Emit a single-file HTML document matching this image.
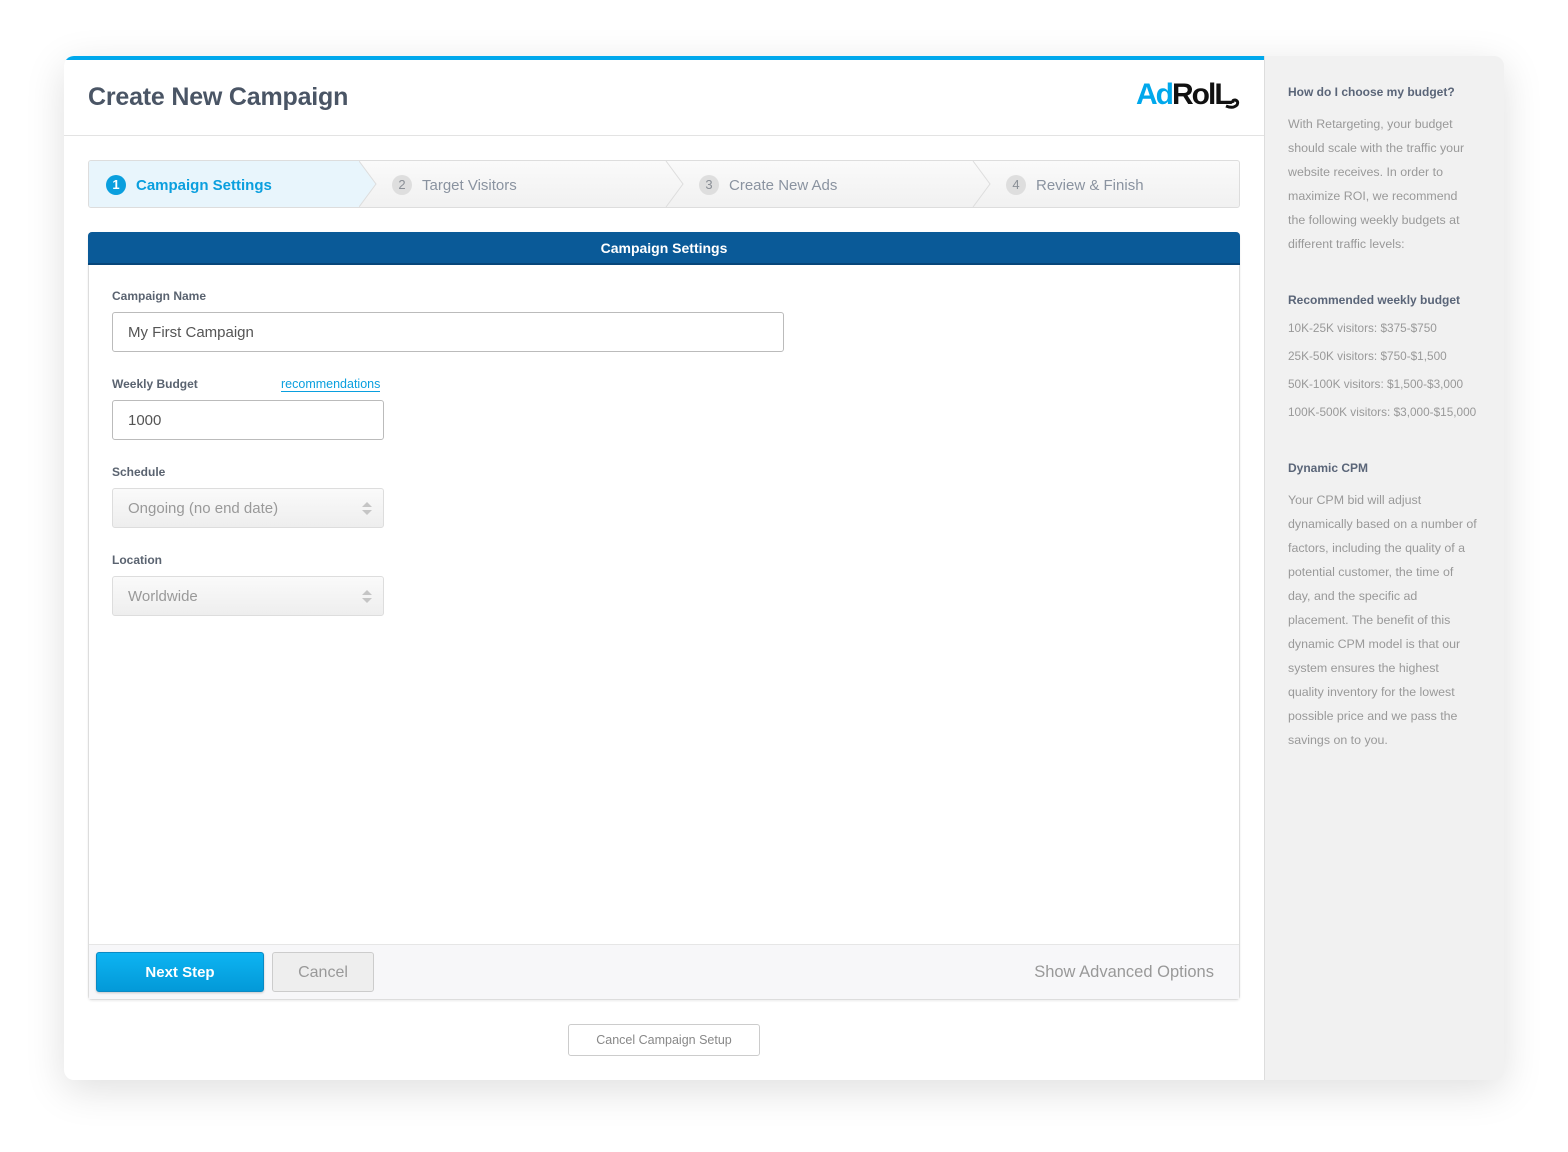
<!DOCTYPE html>
<html><head><style>
*{box-sizing:border-box;margin:0;padding:0}
body{width:1568px;height:1152px;background:#fff;font-family:"Liberation Sans",sans-serif;position:relative;overflow:hidden}
.card{position:absolute;left:64px;top:56px;width:1440px;height:1024px;border-radius:10px;background:#f1f1f1;box-shadow:0 10px 40px rgba(0,0,0,.13);overflow:hidden}
.main{position:absolute;left:0;top:0;width:1201px;height:1024px;background:#fff;border-right:1px solid #ddd}
.topbar{position:absolute;left:0;top:0;width:1200px;height:4px;background:#00a8ec}
.abs{position:absolute}
h1{position:absolute;left:24px;top:27px;font-size:25px;font-weight:bold;color:#4a5565;letter-spacing:-.2px}
.hline{position:absolute;left:0;top:79px;width:1200px;height:1px;background:#e3e3e3}
.steps{position:absolute;left:24px;top:104px;width:1152px;height:48px;border:1px solid #ddd;border-radius:3px;background:linear-gradient(#fafafa,#f1f1f1);overflow:hidden}
.step{position:absolute;top:2px;height:46px;line-height:46px;font-size:15px;color:#8a93a0}
.num{display:inline-block;width:20px;height:20px;border-radius:50%;background:#dedede;color:#8a8f96;font-size:13px;line-height:20px;text-align:center;margin-right:10px;vertical-align:1px}
.side{position:absolute;left:1224px;top:0;width:190px;font-size:12.4px;color:#999;line-height:24px}
.side b{color:#5a6578;font-size:12px}
label{position:absolute;font-size:12px;font-weight:bold;color:#5a6370}
.inp{position:absolute;border:1px solid #bbb;border-radius:3px;height:40px;line-height:39px;padding-left:15px;font-size:15px;color:#555}
.sel{position:absolute;border:1px solid #ddd;border-radius:3px;height:40px;line-height:39px;padding-left:15px;font-size:15px;color:#999;background:linear-gradient(#fafafa,#eee)}
.arr{position:absolute;right:11px;top:13px;width:0;height:0;border-left:5px solid transparent;border-right:5px solid transparent;border-bottom:5px solid #c5c5c5}
.arr2{position:absolute;right:11px;top:21px;width:0;height:0;border-left:5px solid transparent;border-right:5px solid transparent;border-top:5px solid #c5c5c5}
</style></head><body>
<div class="card">
<div class="main">
<div class="topbar"></div>
<h1>Create New Campaign</h1>
<div class="abs" style="left:1072px;top:22px;font-size:30px;font-weight:bold;letter-spacing:-2px"><span style="color:#00a8ec">Ad</span><span style="color:#111">RolL</span></div>
<svg class="abs" style="left:1160px;top:38px" width="18" height="16"><path d="M2,12 Q9,15 13,11 Q15,7 11,6 Q8,6 9,9" stroke="#111" stroke-width="3" fill="none"/></svg>
<div class="hline"></div>
<div class="steps">
<div class="abs" style="left:0;top:0;width:270px;height:46px;background:#e8f5fc"></div>
<svg class="abs" style="left:270px;top:0" width="900" height="46">
<path d="M0,0 L17,23 L0,46 L0,0Z" fill="#e8f5fc"/>
<path d="M0,0 L17,23 L0,46" stroke="#ddd" fill="none"/>
<path d="M307,0 L324,23 L307,46" stroke="#ddd" fill="none"/>
<path d="M614,0 L631,23 L614,46" stroke="#ddd" fill="none"/>
</svg>
<div class="step" style="left:17px;color:#0a9fde;font-weight:bold"><span class="num" style="background:#0a9fde;color:#fff">1</span>Campaign Settings</div>
<div class="step" style="left:303px"><span class="num">2</span>Target Visitors</div>
<div class="step" style="left:610px"><span class="num">3</span>Create New Ads</div>
<div class="step" style="left:917px"><span class="num">4</span>Review &amp; Finish</div>
</div>
<div class="abs" style="left:24px;top:176px;width:1152px;height:768px;border:1px solid #ddd;border-radius:4px;box-shadow:0 1px 2px rgba(0,0,0,.08)">
<div class="abs" style="left:-1px;top:-1px;width:1152px;height:33px;background:#0a5a98;border-radius:4px 4px 0 0;color:#fff;font-weight:bold;font-size:14px;text-align:center;line-height:32px;border-bottom:2px solid #07467a">Campaign Settings</div>
<div class="abs" style="left:0;top:711px;width:1150px;height:55px;background:#f7f7f9;border-top:1px solid #e6e6e6"></div>
</div>
<label style="left:48px;top:233px">Campaign Name</label>
<div class="inp" style="left:48px;top:256px;width:672px">My First Campaign</div>
<label style="left:48px;top:321px">Weekly Budget</label>
<div class="abs" style="left:217px;top:321px;font-size:12.5px;color:#0a9fde;border-bottom:1px solid #0a9fde;line-height:14px">recommendations</div>
<div class="inp" style="left:48px;top:344px;width:272px">1000</div>
<label style="left:48px;top:409px">Schedule</label>
<div class="sel" style="left:48px;top:432px;width:272px">Ongoing (no end date)<i class="arr"></i><i class="arr2"></i></div>
<label style="left:48px;top:497px">Location</label>
<div class="sel" style="left:48px;top:520px;width:272px">Worldwide<i class="arr"></i><i class="arr2"></i></div>
<div class="abs" style="left:32px;top:896px;width:168px;height:40px;border-radius:3px;background:linear-gradient(#0db4f2,#0399d8);border:1px solid #0a8ac4;color:#fff;font-weight:bold;font-size:15px;text-align:center;line-height:40px;box-shadow:0 1px 2px rgba(0,0,0,.2)">Next Step</div>
<div class="abs" style="left:208px;top:896px;width:102px;height:40px;border-radius:3px;background:#eee;border:1px solid #ccc;color:#999;font-size:16px;text-align:center;line-height:40px">Cancel</div>
<div class="abs" style="left:850px;width:300px;text-align:right;top:907px;font-size:16.5px;color:#999">Show Advanced Options</div>
<div class="abs" style="left:504px;top:968px;width:192px;height:32px;border:1px solid #ccc;border-radius:3px;color:#888;font-size:12.5px;text-align:center;line-height:31px">Cancel Campaign Setup</div>
</div>
<div class="side" style="top:24px"><b>How do I choose my budget?</b></div>
<div class="side" style="top:56px">With Retargeting, your budget should scale with the traffic your website receives. In order to maximize ROI, we recommend the following weekly budgets at different traffic levels:</div>
<div class="side" style="top:232px"><b>Recommended weekly budget</b></div>
<div class="side" style="top:258px;line-height:28px;font-size:11.8px;width:220px">10K-25K visitors: $375-$750<br>25K-50K visitors: $750-$1,500<br>50K-100K visitors: $1,500-$3,000<br>100K-500K visitors: $3,000-$15,000</div>
<div class="side" style="top:400px"><b>Dynamic CPM</b></div>
<div class="side" style="top:432px">Your CPM bid will adjust dynamically based on a number of factors, including the quality of a potential customer, the time of day, and the specific ad placement. The benefit of this dynamic CPM model is that our system ensures the highest quality inventory for the lowest possible price and we pass the savings on to you.</div>
</div>
</body></html>
